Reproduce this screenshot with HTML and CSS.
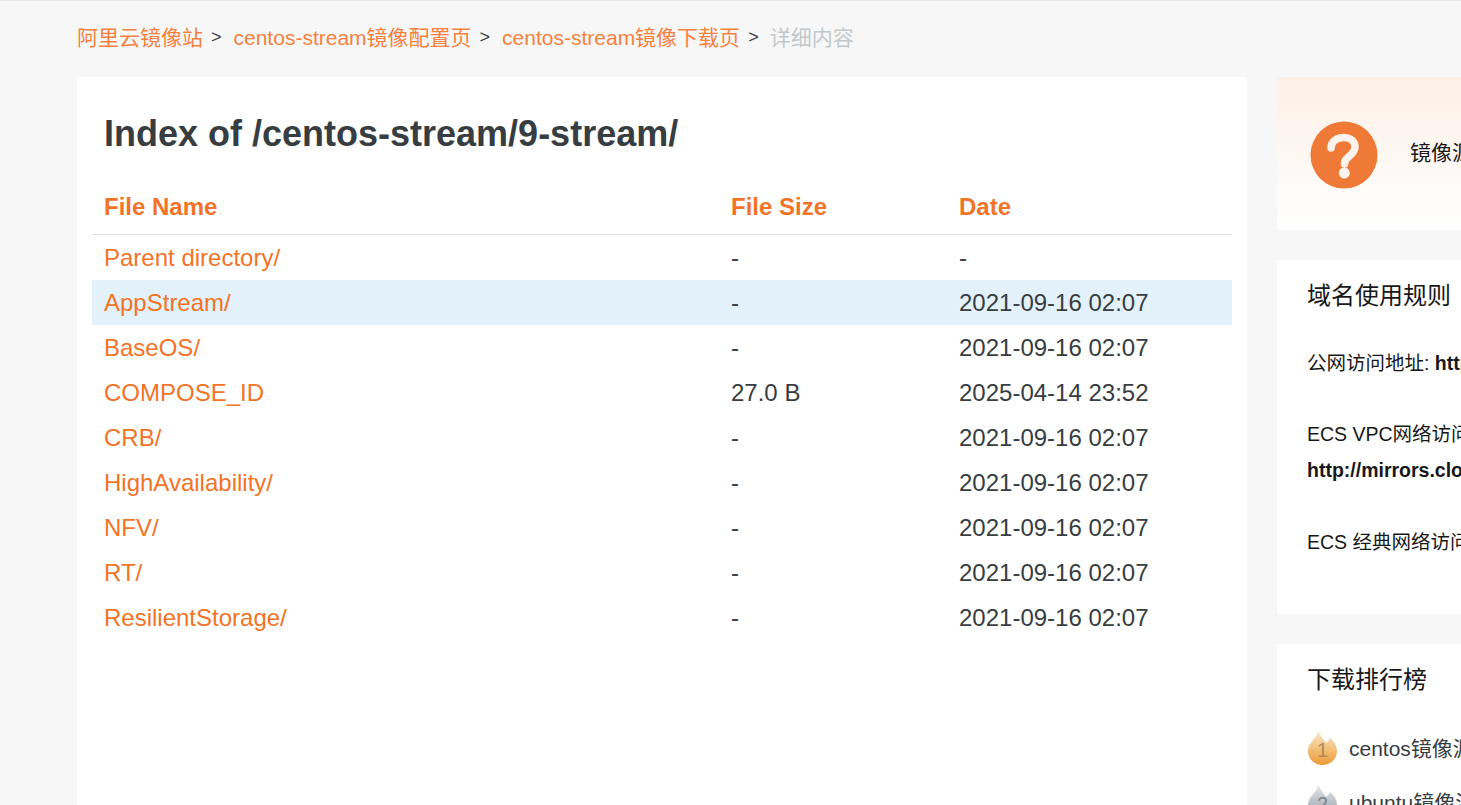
FILE: index.html
```html
<!DOCTYPE html>
<html lang="zh-CN">
<head>
<meta charset="utf-8">
<title>Index of /centos-stream/9-stream/</title>
<link rel="stylesheet" href="styles.css">
</head>
<body>
<div class="page">
  <nav class="crumbs">
    <a class="crumb" href="#">阿里云镜像站</a><span class="sep">&gt;</span>
    <a class="crumb" href="#">centos-stream镜像配置页</a><span class="sep">&gt;</span>
    <a class="crumb" href="#">centos-stream镜像下载页</a><span class="sep">&gt;</span>
    <span class="crumb-current">详细内容</span>
  </nav>
  <div class="layout">
    <main class="main-card">
      <h1 class="title">Index of /centos-stream/9-stream/</h1>
      <table class="files">
        <thead>
          <tr><th class="col-name">File Name</th><th class="col-size">File Size</th><th class="col-date">Date</th></tr>
        </thead>
        <tbody>
          <tr><td><a href="#">Parent directory/</a></td><td>-</td><td>-</td></tr>
          <tr class="hover"><td><a href="#">AppStream/</a></td><td>-</td><td>2021-09-16 02:07</td></tr>
          <tr><td><a href="#">BaseOS/</a></td><td>-</td><td>2021-09-16 02:07</td></tr>
          <tr><td><a href="#">COMPOSE_ID</a></td><td>27.0 B</td><td>2025-04-14 23:52</td></tr>
          <tr><td><a href="#">CRB/</a></td><td>-</td><td>2021-09-16 02:07</td></tr>
          <tr><td><a href="#">HighAvailability/</a></td><td>-</td><td>2021-09-16 02:07</td></tr>
          <tr><td><a href="#">NFV/</a></td><td>-</td><td>2021-09-16 02:07</td></tr>
          <tr><td><a href="#">RT/</a></td><td>-</td><td>2021-09-16 02:07</td></tr>
          <tr><td><a href="#">ResilientStorage/</a></td><td>-</td><td>2021-09-16 02:07</td></tr>
        </tbody>
      </table>
    </main>
    <aside class="side">
      <section class="help-card">
        <svg class="help-icon" viewBox="0 0 68 68" aria-hidden="true">
          <circle cx="34" cy="34" r="33.5" fill="#ef7936"/>
          <path d="M21 27C21 20.500 27 16.500 33.500 16.500C40.500 16.500 45 20.500 45 26C45 30 42.500 32.500 39.500 35C36.500 37.500 34.500 39 34.500 43" fill="none" stroke="#fdf3ec" stroke-width="7.500" stroke-linecap="round"/>
          <circle cx="34.300" cy="52" r="5.500" fill="#fdf3ec"/>
        </svg>
        <span class="help-text">镜像源常见问题与帮助</span>
      </section>
      <section class="card rules">
        <h2 class="card-title">域名使用规则</h2>
        <p class="rule rule-a">公网访问地址: <b>http://mirrors.aliyun.com/</b></p>
        <p class="rule rule-b">ECS VPC网络访问地址:<br><b class="rule-url">http://mirrors.cloud.aliyuncs.com/</b></p>
        <p class="rule rule-c">ECS 经典网络访问地址: <b>http://mirrors.aliyuncs.com/</b></p>
      </section>
      <section class="card ranks">
        <h2 class="card-title">下载排行榜</h2>
        <ul class="rank-list">
          <li class="rank-item">
            <svg class="flame" viewBox="0 0 30 36" aria-hidden="true">
              <defs><linearGradient id="gold" x1="0" y1="0" x2="0" y2="1"><stop offset="0" stop-color="#fbe9d2"/><stop offset="0.45" stop-color="#f4c78a"/><stop offset="1" stop-color="#eb9a34"/></linearGradient></defs>
              <path d="M10 0C11 4 15 8 18 13C19.500 11.500 21.500 10 22 8C26 11 29 16 29 21C29 29 22.500 35 14.500 35C6.500 35 0 29 0 21C0 16 3 13 5 10C8 7 10 4 10 0Z" fill="url(#gold)"/>
              <text class="flame-num" x="14.500" y="27" text-anchor="middle" fill="#b68a5a">1</text>
            </svg>
            <span>centos镜像源</span>
          </li>
          <li class="rank-item">
            <svg class="flame" viewBox="0 0 30 36" aria-hidden="true">
              <defs><linearGradient id="silver" x1="0" y1="0" x2="0" y2="1"><stop offset="0" stop-color="#e6e8eb"/><stop offset="0.5" stop-color="#bcc2c9"/><stop offset="1" stop-color="#949ba4"/></linearGradient></defs>
              <path d="M10 0C11 4 15 8 18 13C19.500 11.500 21.500 10 22 8C26 11 29 16 29 21C29 29 22.500 35 14.500 35C6.500 35 0 29 0 21C0 16 3 13 5 10C8 7 10 4 10 0Z" fill="url(#silver)"/>
              <text class="flame-num" x="14.500" y="27" text-anchor="middle" fill="#7c838c">2</text>
            </svg>
            <span>ubuntu镜像源</span>
          </li>
        </ul>
      </section>
    </aside>
  </div>
</div>
</body>
</html>
```
FILE: styles.css
```css
html, body {
  margin: 0;
  padding: 0;
  height: 805px;
  overflow: hidden;
}
body {
  background: #f7f7f7;
  border-top: 1px solid #e8e8e8;
  box-sizing: border-box;
  font-family: "Liberation Sans", "Noto Sans CJK SC", sans-serif;
  color: #373d41;
}
.page {
  width: 1640px;
  padding: 0 0 0 77px;
}
.crumbs {
  display: flex;
  align-items: center;
  height: 76px;
  padding-bottom: 6px;
  box-sizing: border-box;
  font-size: 21px;
}
.crumb { color: #f6813f; text-decoration: none; }
.sep { font-size: 18px; margin: 0 12px 0 8px; padding-top: 3px; color: #373d41; }
.crumb-current { color: #c3c8cc; margin-left: -1px; }
.layout {
  display: flex;
  gap: 30px;
  align-items: flex-start;
}
.main-card {
  width: 1170px;
  height: 760px;
  flex: none;
  background: #fff;
  padding: 0 15px;
  box-sizing: border-box;
}
.title {
  margin: 0;
  padding: 35px 12px 0;
  font-size: 36px;
  line-height: 44px;
  font-weight: 700;
  color: #373d41;
}
.files {
  width: 1140px;
  margin-top: 25px;
  border-collapse: collapse;
  table-layout: fixed;
  font-size: 24px;
}
.files th {
  text-align: left;
  font-weight: 700;
  color: #f37327;
  height: 53px;
  padding: 0 12px;
  box-sizing: border-box;
  border-bottom: 1px solid #ddd;
}
.col-name { width: 627px; }
.col-size { width: 228px; }
.col-date { width: 285px; }
.files td {
  height: 45px;
  padding: 0 12px;
  box-sizing: border-box;
  color: #373d41;
}
.files tbody tr:first-child td { height: 46px; padding-top: 2px; }
.files a { color: #f37327; text-decoration: none; }
.hover td { background: #e3f1fa; }
.side {
  width: 420px;
  flex: none;
  display: flex;
  flex-direction: column;
  gap: 30px;
}
.help-card {
  height: 153px;
  display: flex;
  align-items: center;
  padding-left: 33px;
  background: linear-gradient(#fcf0e6, #ffffff);
  white-space: nowrap;
}
.help-icon { width: 68px; height: 68px; flex: none; margin-top: 3px; }
.help-text { margin-left: 32px; padding-bottom: 6px; font-size: 21px; color: #181818; }
.card {
  background: #fff;
  padding: 0 30px;
  white-space: nowrap;
}
.card-title {
  margin: 0;
  font-size: 24px;
  line-height: 34px;
  font-weight: 400;
  color: #181818;
}
.rules { height: 354px; padding-top: 19px; box-sizing: border-box; }
.rule { margin: 0; font-size: 19.500px; line-height: 36px; color: #181818; }
.rule-a { margin-top: 32px; }
.rule-b { margin-top: 35px; }
.rule-c { margin-top: 36px; }
.ranks { height: 300px; padding-top: 19px; box-sizing: border-box; }
.rank-list { list-style: none; margin: 32px 0 0; padding: 0; display: flex; flex-direction: column; gap: 18px; }
.rank-item { display: flex; align-items: center; gap: 11px; font-size: 21px; color: #373d41; height: 36px; }
.flame { width: 30px; height: 36px; flex: none; margin: 2px 0 0 1px; }
.flame-num { font-size: 20px; }
```
